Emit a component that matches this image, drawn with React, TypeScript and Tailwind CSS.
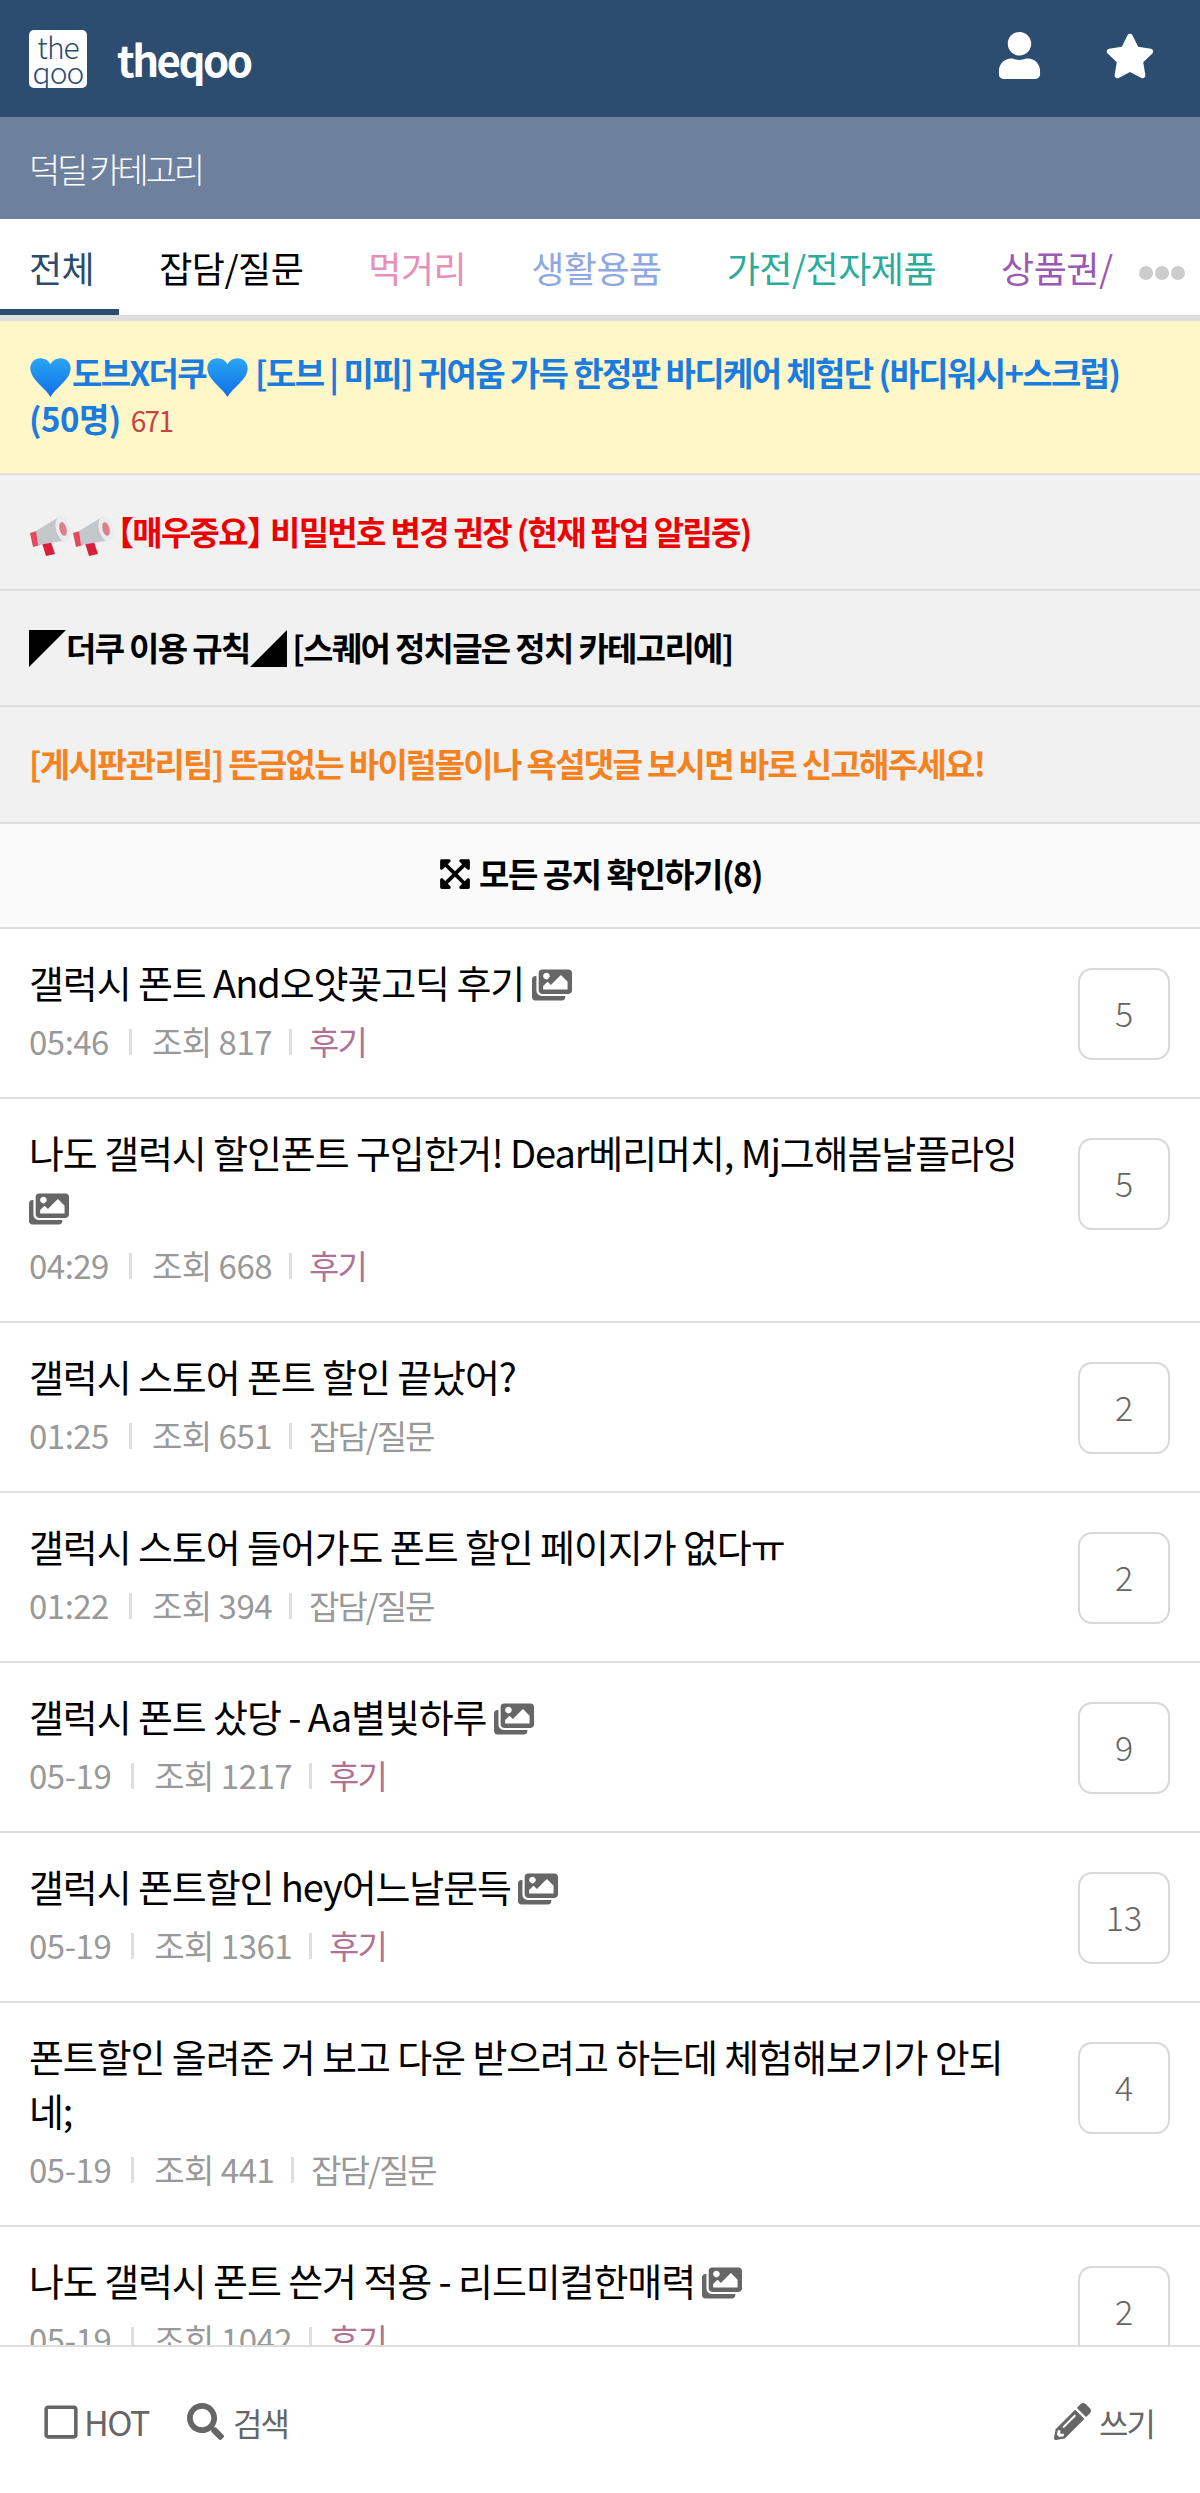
import type { ReactNode } from 'react'
import { FaExpandArrowsAlt, FaImages, FaPencilAlt, FaRegSquare, FaSearch, FaStar, FaUser } from 'react-icons/fa'

const tabs = [
  { label: '전체', className: 'text-[#2b4c6e]' },
  { label: '잡담/질문', className: 'text-black' },
  { label: '먹거리', className: 'text-[#e88fb8]' },
  { label: '생활용품', className: 'text-[#8fa8e3]' },
  { label: '가전/전자제품', className: 'text-[#2bab9c]' },
  { label: '상품권/', className: 'text-[#9b59b6]' },
]

const posts = [
  { title: '갤럭시 폰트 And오얏꽃고딕 후기', time: '05:46', views: '817', cat: '후기', count: 5, image: true },
  { title: '나도 갤럭시 할인폰트 구입한거! Dear베리머치, Mj그해봄날플라잉', time: '04:29', views: '668', cat: '후기', count: 5, image: true },
  { title: '갤럭시 스토어 폰트 할인 끝났어?', time: '01:25', views: '651', cat: '잡담/질문', count: 2 },
  { title: '갤럭시 스토어 들어가도 폰트 할인 페이지가 없다ㅠ', time: '01:22', views: '394', cat: '잡담/질문', count: 2 },
  { title: '갤럭시 폰트 샀당 - Aa별빛하루', time: '05-19', views: '1217', cat: '후기', count: 9, image: true },
  { title: '갤럭시 폰트할인 hey어느날문득', time: '05-19', views: '1361', cat: '후기', count: 13, image: true },
  { title: '폰트할인 올려준 거 보고 다운 받으려고 하는데 체험해보기가 안되네;', time: '05-19', views: '441', cat: '잡담/질문', count: 4 },
  { title: '나도 갤럭시 폰트 쓴거 적용 - 리드미컬한매력', time: '05-19', views: '1042', cat: '후기', count: 2, image: true },
]

const Heart = () => (
  <svg viewBox="0 0 32 30" preserveAspectRatio="none" className="-my-[10px] inline-block h-[40px] w-[43px] align-middle">
    <defs>
      <linearGradient id="heart" x1="0" y1="0" x2="0" y2="1">
        <stop offset="0" stopColor="#2aa4f4" />
        <stop offset="1" stopColor="#0f6fe8" />
      </linearGradient>
    </defs>
    <path d="M16 30C12 23 1 17 1 8.500 1 4 4.500 1 8.500 1c3.500 0 6 1.500 7.500 4.500C17.500 2.500 20 1 23.500 1 27.500 1 31 4 31 8.500 31 17 20 23 16 30z" fill="url(#heart)" />
  </svg>
)

const Megaphone = () => (
  <svg viewBox="0 0 43 40" className="-my-[10px] inline-block h-[40px] w-[43px] align-middle">
    <path d="M12 24l9-1 5 15-9 2z" fill="#d81f3c" />
    <path d="M1 17l7-2 3 14-7 2z" fill="#e5475c" />
    <path d="M7 15L30 1l9 23-30 5z" fill="#c4c7ca" />
    <ellipse cx="34" cy="13" rx="7" ry="13" transform="rotate(-15 34 13)" fill="#e9ebed" />
    <ellipse cx="34" cy="13" rx="3.500" ry="7" transform="rotate(-15 34 13)" fill="#d9808c" />
  </svg>
)

const Notice = ({ children, className }: { children: ReactNode; className: string }) => (
  <div className={`border-b-2 border-[#dedede] bg-[#f1f1f1] px-[29px] pt-[35px] text-[33px] font-bold leading-[42px] tracking-[-1.700px] ${className}`}>
    {children}
  </div>
)

const PostRow = ({ post }: { post: (typeof posts)[number] }) => (
  <div className="flex justify-between border-b-2 border-[#dedede] pb-[30px] pl-[29px] pr-[30px] pt-[26px]">
    <div className="w-[996px]">
      <div className="text-[38px] leading-[54px] tracking-[-1.100px] text-black">
        {post.title}
        {post.image && ' '}
        {post.image && <FaImages className="inline-block align-[-7px] text-[40px] text-[#666666]" />}
      </div>
      <div className="mt-[7px] flex items-center text-[33px] leading-[51px] tracking-[-0.500px] text-[#999999]">
        <span>{post.time}</span>
        <span className="mx-[20px] h-[26px] w-[3px] bg-[#dedede]" />
        <span>조회 {post.views}</span>
        <span className="mx-[17px] h-[26px] w-[3px] bg-[#dedede]" />
        <span className={post.cat === '후기' ? 'tracking-[-2px] text-[#b07394]' : 'tracking-[-2px]'}>{post.cat}</span>
      </div>
    </div>
    <div className="mt-[13px] flex h-[92px] w-[92px] shrink-0 items-center justify-center rounded-[14px] border-2 border-[#d9d9d9] pb-[3px] text-[34px] font-light text-[#666666]">
      {post.count}
    </div>
  </div>
)

export default function App() {
  return (
    <div className="flex h-[2493px] flex-col overflow-hidden bg-white font-['Noto_Sans_CJK_KR','Noto_Sans',sans-serif]">
      <div className="flex h-[117px] shrink-0 items-center justify-between bg-[#2c4d6f] pl-[29px] pr-[45px]">
        <div className="flex items-center">
          <div className="flex h-[58px] w-[58px] flex-col items-center justify-center rounded-[5px] bg-white text-[30px] font-light leading-[25px] tracking-[-1px] text-[#2c4d6f]">
            <span>the</span>
            <span>qoo</span>
          </div>
          <span className="ml-[30px] text-[42px] font-bold tracking-[-2.500px] text-white">theqoo</span>
        </div>
        <div className="mb-[6px] flex items-center gap-[62px] text-white">
          <FaUser className="text-[47px]" />
          <FaStar className="text-[50px]" />
        </div>
      </div>
      <div className="flex h-[102px] shrink-0 items-center bg-[#6d819e] px-[29px] text-[34px] font-light tracking-[-3.200px] text-white">덕딜 카테고리</div>
      <div className="relative flex h-[102px] shrink-0 items-center overflow-hidden border-b-[6px] border-[#dedede] text-[36px] tracking-[-0.500px]">
        <div className="flex items-center gap-[65px] whitespace-nowrap px-[29px]">
          {tabs.map((tab) => (
            <span key={tab.label} className={tab.className}>{tab.label}</span>
          ))}
        </div>
        <div className="absolute bottom-0 left-0 h-[6px] w-[119px] bg-[#2c4d6f]" />
        <div className="absolute right-[15px] top-[47px] flex gap-[2px]">
          <span className="h-[14px] w-[14px] rounded-full bg-[#cccccc]" />
          <span className="h-[14px] w-[14px] rounded-full bg-[#cccccc]" />
          <span className="h-[14px] w-[14px] rounded-full bg-[#cccccc]" />
        </div>
      </div>
      <main className="min-h-0 flex-1 overflow-hidden">
        <div className="border-b-2 border-[#dedede] bg-[#fff7c7] pb-[30px] pl-[29px] pr-[60px] pt-[28px] text-[33px] font-bold leading-[46px] tracking-[-1.600px] text-[#1a7be0]">
          <Heart />도브X더쿠<Heart /> [도브 | 미피] 귀여움 가득 한정판 바디케어 체험단 (바디워시+스크럽) <span className="tracking-[-0.500px]">(50명)</span> <span className="ml-[4px] text-[28px] font-normal text-[#c8403f]">671</span>
        </div>
        <Notice className="pb-[37px] text-[#ee0000]">
          <Megaphone /><Megaphone /><span className="-ml-[14px] -mr-[14px]">【매우중요】</span> 비밀번호 변경 권장 (현재 팝업 알림중)
        </Notice>
        <Notice className="pb-[37px] text-black">
          <span className="inline-block h-0 w-0 border-r-[37px] border-t-[37px] border-r-transparent border-t-black align-[-6px]" />더쿠 이용 규칙<span className="inline-block h-0 w-0 border-b-[37px] border-l-[37px] border-b-black border-l-transparent align-[-6px]" /> [스퀘어 정치글은 정치 카테고리에]
        </Notice>
        <Notice className="pb-[38px] text-[#f5821f]">[게시판관리팀] 뜬금없는 바이럴몰이나 욕설댓글 보시면 바로 신고해주세요!</Notice>
        <div className="flex h-[105px] items-center justify-center gap-[7px] border-b-2 border-[#dedede] bg-[#fafafa] pb-[4px] text-[33px] font-bold tracking-[-1.500px] text-black">
          <FaExpandArrowsAlt className="text-[34px]" />
          모든 공지 확인하기(8)
        </div>
        {posts.map((post) => (
          <PostRow key={post.title} post={post} />
        ))}
      </main>
      <div className="flex h-[148px] shrink-0 items-center justify-between border-t-2 border-[#dedede] pl-[42px] pr-[46px] pt-[3px] text-[32px] tracking-[-2px] text-[#666666]">
        <div className="flex items-center">
          <FaRegSquare className="text-[38px]" />
          <span className="ml-[4px] text-[34px] tracking-[-1.500px]">HOT</span>
          <FaSearch className="ml-[38px] text-[37px]" />
          <span className="ml-[9px]">검색</span>
        </div>
        <div className="flex items-center">
          <FaPencilAlt className="text-[37px]" />
          <span className="ml-[8px]">쓰기</span>
        </div>
      </div>
    </div>
  )
}
